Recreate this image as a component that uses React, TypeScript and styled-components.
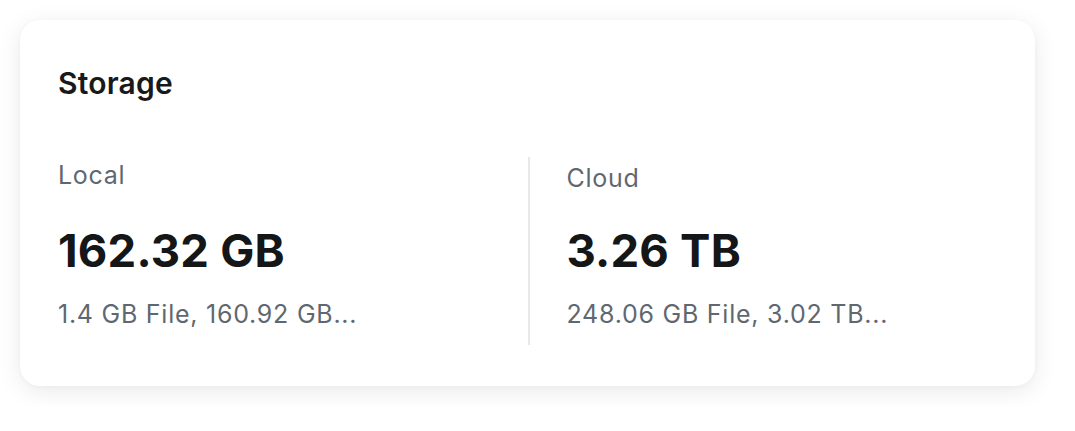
import React from "react";
import styled, { createGlobalStyle } from "styled-components";

const Global = createGlobalStyle`
  * { box-sizing: border-box; }
  html, body { margin: 0; padding: 0; background: #ffffff; }
  body { font-family: Inter, "Noto Sans", "Liberation Sans", sans-serif; -webkit-font-smoothing: antialiased; }
`;

const Page = styled.div`
  padding: 20px;
  width: 1075px;
`;

const Card = styled.section`
  width: 1015px;
  height: 366px;
  background: #ffffff;
  border-radius: 20px;
  box-shadow: 0 5px 24px rgba(0, 0, 0, 0.085), 0 1px 4px rgba(0, 0, 0, 0.03);
  padding: 45px 38px 41px 38px;
  display: flex;
  flex-direction: column;
`;

const Title = styled.h2`
  margin: 0;
  font-size: 30px;
  line-height: 36px;
  font-weight: 600;
  letter-spacing: 0.2px;
  color: #18191b;
`;

const Columns = styled.div`
  margin-top: 56px;
  display: grid;
  grid-template-columns: 1fr 1fr;
  height: 188px;
`;

const Column = styled.div<{ $divided?: boolean }>`
  display: flex;
  flex-direction: column;
  padding-top: 3px;
  ${(p) =>
    p.$divided
      ? `border-left: 2px solid #e6e8eb; padding-left: 37px;`
      : ``}
`;

const Label = styled.div<{ $offset?: number }>`
  font-size: 25px;
  line-height: 30px;
  font-weight: 400;
  letter-spacing: 0.72px;
  color: #5f6870;
  margin-top: ${(p) => p.$offset ?? 0}px;
`;

const Value = styled.div<{ $offset?: number }>`
  margin-top: ${(p) => 34 - (p.$offset ?? 0)}px;
  font-size: 45.5px;
  line-height: 54px;
  font-weight: 700;
  letter-spacing: 0.2px;
  color: #151618;
`;

const Detail = styled.div`
  margin-top: 21px;
  font-size: 25px;
  line-height: 30px;
  font-weight: 400;
  letter-spacing: 0.75px;
  color: #5f6870;
  white-space: nowrap;
`;

const items = [
  { label: "Local", value: "162.32 GB", detail: "1.4 GB File, 160.92 GB...", offset: 0 },
  { label: "Cloud", value: "3.26 TB", detail: "248.06 GB File, 3.02 TB...", offset: 3 },
];

export default function App() {
  return (
    <>
      <Global />
      <Page>
        <Card>
          <Title>Storage</Title>
          <Columns>
            {items.map((it, i) => (
              <Column key={it.label} $divided={i > 0}>
                <Label $offset={it.offset}>{it.label}</Label>
                <Value $offset={it.offset}>{it.value}</Value>
                <Detail>{it.detail}</Detail>
              </Column>
            ))}
          </Columns>
        </Card>
      </Page>
    </>
  );
}
